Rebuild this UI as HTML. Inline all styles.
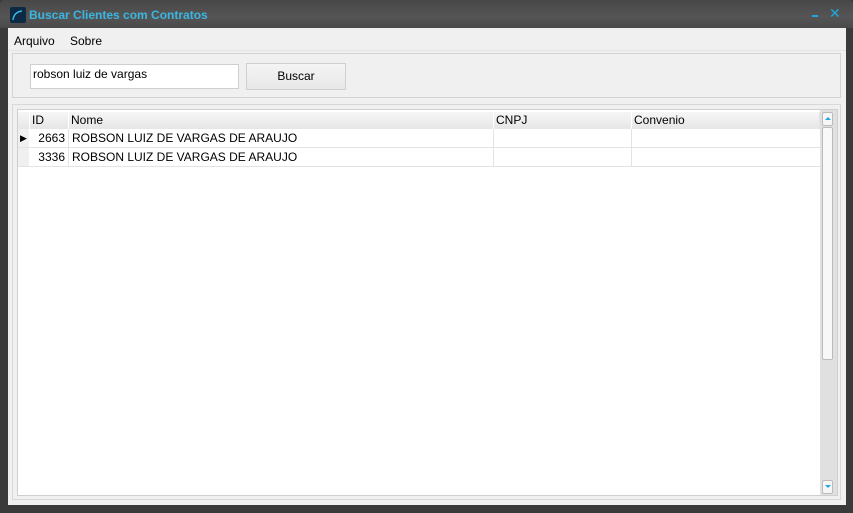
<!DOCTYPE html>
<html><head><style>
body{margin:0;width:853px;height:513px;background:#3a3a3a;overflow:hidden;font-family:"Liberation Sans",sans-serif;font-size:12px;color:#000;position:relative}
.a{position:absolute}
.tb{left:0;top:0;width:853px;height:28px;background:linear-gradient(#474747,#555 60%,#4a4a4a);border-radius:4px 4px 0 0}
.ttl{left:29px;top:8px;color:#3ab6e2;font-weight:bold;font-size:12px}
.client{left:8px;top:28px;width:838px;height:477px;background:#f0f0f0}
.cell{position:absolute;top:0;height:18px;line-height:18px;border-right:1px solid #e3e3e3;box-sizing:border-box;overflow:hidden;white-space:nowrap}
</style></head><body>
<div class="a tb"></div>
<div class="a" style="left:10px;top:7px;width:16px;height:16px;background:#0d2a45;border-radius:2px"></div>
<svg class="a" style="left:10px;top:7px" width="16" height="16"><path d="M3 13 Q4 5 12 4" stroke="#3ab6e2" stroke-width="1.5" fill="none"/></svg>
<div class="a ttl">Buscar Clientes com Contratos</div>
<div class="a" style="left:812px;top:15px;width:6px;height:2px;background:#1fa8e0"></div>
<div class="a" style="left:829px;top:5px;color:#1fa8e0;font-size:14px">✕</div>
<div class="a client"></div>
<div class="a" style="left:14px;top:34px;font-size:12px">Arquivo</div>
<div class="a" style="left:70px;top:34px;font-size:12px">Sobre</div>
<div class="a" style="left:8px;top:50px;width:838px;height:1px;background:#e4e4e4"></div>
<div class="a" style="left:12px;top:53px;width:829px;height:45px;border:1px solid #d4d4d4;box-sizing:border-box"></div>
<div class="a" style="left:30px;top:64px;width:209px;height:25px;background:#fff;border:1px solid #cfcfcf;box-sizing:border-box;padding:2px 2px;font-size:12px">robson luiz de vargas</div>
<div class="a" style="left:246px;top:63px;width:100px;height:27px;background:linear-gradient(#f4f4f4,#e8e8e8);border:1px solid #cfcfcf;box-sizing:border-box;text-align:center;line-height:25px">Buscar</div>
<div class="a" style="left:12px;top:104px;width:829px;height:396px;border:1px solid #d8d8d8;box-sizing:border-box"></div>
<div class="a" style="left:17px;top:109px;width:821px;height:387px;background:#fff;border:1px solid #cfcfcf;box-sizing:border-box"></div>
<div class="a" style="left:18px;top:112px;width:802px;height:17px;background:linear-gradient(#f6f6f6,#e6e6e6)"></div>
<div class="a" style="left:18px;top:112px;width:802px;height:17px">
<div class="cell" style="left:0;width:12px;height:17px;border-right:1px solid #fff"></div>
<div class="cell" style="left:12px;width:39px;height:17px;line-height:17px;padding-left:2px;border-right:1px solid #fff">ID</div>
<div class="cell" style="left:51px;width:425px;height:17px;line-height:17px;padding-left:2px;border-right:1px solid #fff">Nome</div>
<div class="cell" style="left:476px;width:138px;height:17px;line-height:17px;padding-left:2px;border-right:1px solid #fff">CNPJ</div>
<div class="cell" style="left:614px;width:188px;height:17px;line-height:17px;padding-left:2px">Convenio</div>
</div>
<div class="a" style="left:18px;top:129px;width:802px;height:19px;border-bottom:1px solid #e3e3e3;box-sizing:border-box">
<div class="cell" style="left:0;width:12px;background:#f0f0f0;border-right:1px solid #fff;text-align:center;font-size:9px">▶</div>
<div class="cell" style="left:12px;width:39px;text-align:right;padding-right:3px">2663</div>
<div class="cell" style="left:51px;width:425px;padding-left:3px">ROBSON LUIZ DE VARGAS DE ARAUJO</div>
<div class="cell" style="left:476px;width:138px"></div>
</div>
<div class="a" style="left:18px;top:148px;width:802px;height:19px;border-bottom:1px solid #e3e3e3;box-sizing:border-box">
<div class="cell" style="left:0;width:12px;background:#f0f0f0;border-right:1px solid #fff"></div>
<div class="cell" style="left:12px;width:39px;text-align:right;padding-right:3px">3336</div>
<div class="cell" style="left:51px;width:425px;padding-left:3px">ROBSON LUIZ DE VARGAS DE ARAUJO</div>
<div class="cell" style="left:476px;width:138px"></div>
</div>
<div class="a" style="left:820px;top:110px;width:17px;height:385px;background:#e0e0e0"></div>
<div class="a" style="left:822px;top:112px;width:11px;height:14px;background:#f6f6f6;border:1px solid #bbb;border-radius:2px;box-sizing:border-box"></div>
<div class="a" style="left:825px;top:117px;width:0;height:0;border-left:3px solid transparent;border-right:3px solid transparent;border-bottom:3px solid #1fa8e0"></div>
<div class="a" style="left:822px;top:127px;width:11px;height:233px;background:#f8f8f8;border:1px solid #bbb;border-radius:2px;box-sizing:border-box"></div>
<div class="a" style="left:822px;top:480px;width:11px;height:14px;background:#f6f6f6;border:1px solid #bbb;border-radius:2px;box-sizing:border-box"></div>
<div class="a" style="left:825px;top:485px;width:0;height:0;border-left:3px solid transparent;border-right:3px solid transparent;border-top:3px solid #1fa8e0"></div>
</body></html>
